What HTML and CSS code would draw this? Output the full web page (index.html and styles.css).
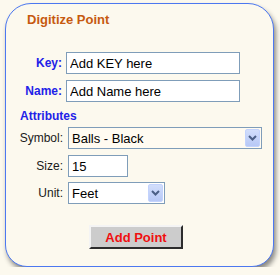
FILE: index.html
```html
<!DOCTYPE html>
<html lang="en">
<head>
    <meta charset="UTF-8">
    <title>Digitize Point</title>
    <link rel="stylesheet" href="styles.css">
</head>
<body>
    <div class="panel">
        <div class="title">Digitize Point</div>

        <div class="field-row key-row">
            <label class="field-label" for="key">Key:</label>
            <input type="text" id="key" class="text-input wide" value="Add KEY here">
        </div>
        <div class="field-row name-row">
            <label class="field-label" for="name">Name:</label>
            <input type="text" id="name" class="text-input wide" value="Add Name here">
        </div>

        <div class="section-title">Attributes</div>

        <div class="attr-row">
            <label class="attr-label" for="symbol">Symbol:</label>
            <div class="select-box symbol-box">
                <select id="symbol" class="select-input">
                    <option>Balls - Black</option>
                </select>
                <span class="select-btn">
                    <svg width="9" height="6" viewBox="0 0 9 6"><path d="M1 1 L4.5 4.5 L8 1" fill="none" stroke="#4b5f86" stroke-width="2"/></svg>
                </span>
            </div>
        </div>
        <div class="attr-row size-row">
            <label class="attr-label" for="size">Size:</label>
            <input type="text" id="size" class="text-input size-input" value="15">
        </div>
        <div class="attr-row unit-row">
            <label class="attr-label" for="unit">Unit:</label>
            <div class="select-box unit-box">
                <select id="unit" class="select-input">
                    <option>Feet</option>
                </select>
                <span class="select-btn">
                    <svg width="9" height="6" viewBox="0 0 9 6"><path d="M1 1 L4.5 4.5 L8 1" fill="none" stroke="#4b5f86" stroke-width="2"/></svg>
                </span>
            </div>
        </div>

        <button type="button" class="button">Add Point</button>
    </div>
</body>
</html>
```

FILE: styles.css
```css
body {
    margin: 0;
    padding: 0;
    background-color: #fcf9ee;
    font-family: 'Liberation Sans', Arial, sans-serif;
}

.panel {
    box-sizing: border-box;
    width: 269px;
    height: 264px;
    margin: 3px 0 0 5px;
    padding-top: 8px;
    background-color: #fcf9ee;
    border: 1px solid #4c78f0;
    border-radius: 26px 26px 22px 22px;
    box-shadow: 2px 4px 5px rgba(0, 0, 0, 0.45);
}

.title {
    margin-left: 21px;
    font-size: 13px;
    line-height: 16px;
    font-weight: bold;
    color: #c65a10;
}

.field-row,
.attr-row {
    display: flex;
    align-items: center;
}

.key-row {
    margin-top: 24px;
}

.name-row {
    margin-top: 6px;
}

.field-label {
    width: 56px;
    margin-right: 4px;
    text-align: right;
    font-size: 12px;
    font-weight: bold;
    color: #2222e8;
}

.attr-label {
    width: 57px;
    margin-right: 5px;
    text-align: right;
    font-size: 12px;
    color: #1a1a1a;
}

.text-input {
    box-sizing: border-box;
    height: 22px;
    margin: 0;
    padding: 0 3px;
    border: 1px solid #7f9db9;
    background-color: #fff;
    font-family: 'Liberation Sans', Arial, sans-serif;
    font-size: 13px;
    color: #000;
    outline: none;
}

.wide {
    width: 174px;
}

.section-title {
    margin: 7px 0 0 14px;
    font-size: 12px;
    line-height: 14px;
    font-weight: bold;
    color: #2222e8;
}

.attr-row {
    margin-top: 6px;
}

.section-title + .attr-row {
    margin-top: 4px;
}

.size-input {
    width: 60px;
}

.unit-row {
    margin-top: 5px;
}

.select-box {
    box-sizing: border-box;
    display: flex;
    height: 22px;
    padding: 1px;
    border: 1px solid #7f9db9;
    background-color: #fff;
}

.symbol-box {
    width: 194px;
    background-color: #fffbf1;
}

.unit-box {
    width: 97px;
}

.select-input {
    flex: 1;
    min-width: 0;
    margin: 0;
    padding: 0 2px;
    border: none;
    background: transparent;
    font-family: 'Liberation Sans', Arial, sans-serif;
    font-size: 13px;
    color: #000;
    appearance: none;
    -webkit-appearance: none;
    outline: none;
}

.select-btn {
    box-sizing: border-box;
    display: flex;
    align-items: center;
    justify-content: center;
    width: 15px;
    border: 1px solid #c3d3fd;
    border-radius: 2px;
    background: linear-gradient(#d2defb, #b7c8f6);
}

.button {
    box-sizing: border-box;
    width: 94px;
    height: 24px;
    margin: 21px 0 0 83px;
    padding: 0;
    background-color: #cccccc;
    border: 2px outset #e8e8e8;
    border-color: #f4f4f4 #808080 #808080 #f4f4f4;
    font-family: 'Liberation Sans', Arial, sans-serif;
    font-size: 13px;
    font-weight: bold;
    color: #f01010;
    cursor: pointer;
}
```
